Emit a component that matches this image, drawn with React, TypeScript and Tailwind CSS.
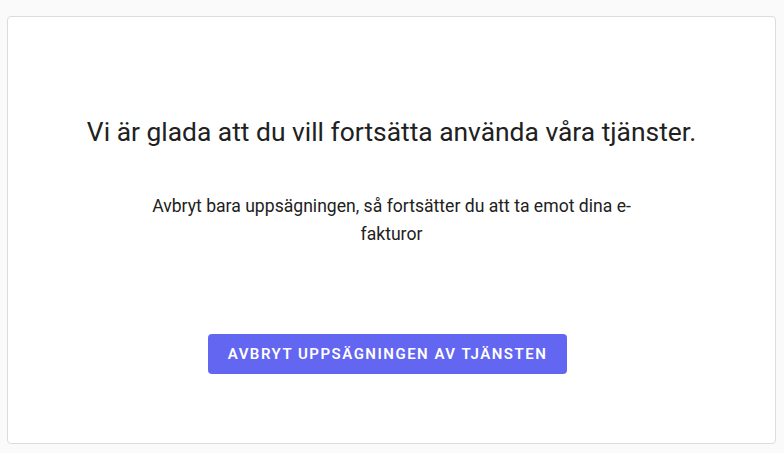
import React from 'react';

export default function App() {
  return (
    <div className="min-h-screen bg-[#fafafa] pt-4 pb-[9px] pl-[7px] pr-2 font-['Roboto',sans-serif]">
      <div className="h-[428px] rounded border border-[#dcdcdc] bg-white flex flex-col items-center">
        <h1 className="mt-[99px] text-[26.4px] leading-[32px] text-[#212121] text-center">
          Vi är glada att du vill fortsätta använda våra tjänster.
        </h1>
        <p className="mt-[44px] max-w-[500px] text-[17.6px] leading-[28px] text-[#212121] text-center">
          Avbryt bara uppsägningen, så fortsätter du att ta emot dina e-fakturor
        </p>
        <button className="mt-[86px] mr-2 h-10 w-[359px] rounded bg-[#6366f1] text-white text-[15px] font-semibold tracking-[0.1em] uppercase">
          Avbryt uppsägningen av tjänsten
        </button>
      </div>
    </div>
  );
}
